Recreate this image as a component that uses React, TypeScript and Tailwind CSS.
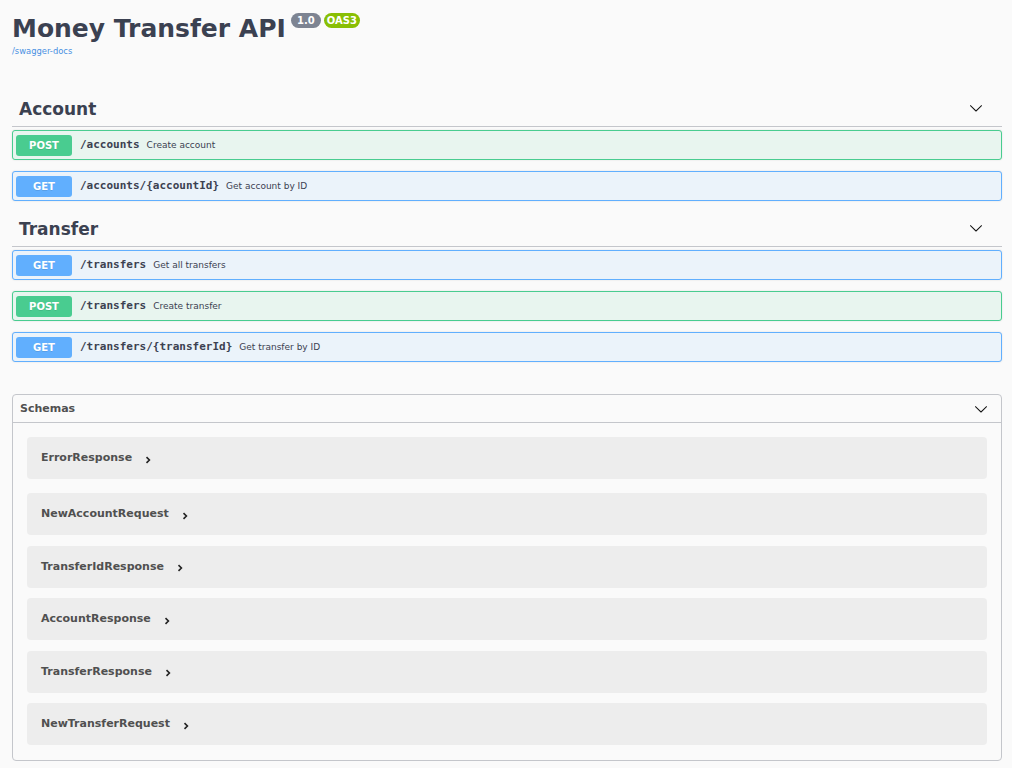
import React from "react";

type Op = { method: "GET" | "POST"; path: string; summary: string };

const tags: { name: string; ops: Op[] }[] = [
  {
    name: "Account",
    ops: [
      { method: "POST", path: "/accounts", summary: "Create account" },
      { method: "GET", path: "/accounts/{accountId}", summary: "Get account by ID" },
    ],
  },
  {
    name: "Transfer",
    ops: [
      { method: "GET", path: "/transfers", summary: "Get all transfers" },
      { method: "POST", path: "/transfers", summary: "Create transfer" },
      { method: "GET", path: "/transfers/{transferId}", summary: "Get transfer by ID" },
    ],
  },
];

const schemas = [
  "ErrorResponse",
  "NewAccountRequest",
  "TransferIdResponse",
  "AccountResponse",
  "TransferResponse",
  "NewTransferRequest",
];

function ChevronDown({ className = "" }: { className?: string }) {
  return (
    <svg viewBox="0 0 20 20" width="14" height="14" className={className}>
      <path
        fill="#111"
        d="M17.418 6.109c.272-.268.709-.268.979 0s.271.701 0 .969l-7.908 7.83c-.27.268-.707.268-.979 0l-7.908-7.83c-.27-.268-.27-.701 0-.969.271-.268.709-.268.979 0L10 13.25l7.418-7.141z"
      />
    </svg>
  );
}

function ChevronRight() {
  return (
    <svg viewBox="0 0 6 8" width="6" height="8">
      <path d="M1.5 1.2 L4.4 4 L1.5 6.8" fill="none" stroke="#222" strokeWidth="1.6" />
    </svg>
  );
}

function OpBlock({ op }: { op: Op }) {
  const post = op.method === "POST";
  return (
    <div
      className={`flex h-[30px] items-center rounded-[3px] border pl-[3px] shadow-[0_0_2px_rgba(0,0,0,0.12)] ${
        post ? "border-[#49cc90] bg-[#e8f5ef]" : "border-[#61affe] bg-[#ebf3fa]"
      }`}
    >
      <span
        className={`flex h-[21px] w-[56px] items-center justify-center rounded-[3px] text-[10px] font-bold text-white [text-shadow:0_1px_0_rgba(0,0,0,0.1)] ${
          post ? "bg-[#49cc90]" : "bg-[#61affe]"
        }`}
      >
        {op.method}
      </span>
      <span className="mt-[1px] ml-[8px] font-['DejaVu_Sans_Mono',monospace] text-[11px] font-bold text-[#3b4151]">
        {op.path}
      </span>
      <span className="mt-[1px] ml-[7px] text-[9px] text-[#3b4151]">{op.summary}</span>
    </div>
  );
}

export default function App() {
  return (
    <div className="min-h-screen bg-[#fafafa] pl-[12px] pr-[10px] font-['DejaVu_Sans',sans-serif] text-[#3b4151]">
      <div className="pt-[14px]">
        <div className="flex items-start">
          <h1 className="text-[25px] leading-[30px] font-bold text-[#3b4151]">Money Transfer API</h1>
          <span className="ml-[5px] -mt-[1px] h-[15px] w-[30px] rounded-full bg-[#7d8492] text-center text-[10px] leading-[15px] font-bold text-white">
            1.0
          </span>
          <span className="ml-[3px] -mt-[1px] h-[15px] w-[36px] rounded-full bg-[#89bf04] text-center text-[10px] leading-[15px] font-bold text-white">
            OAS3
          </span>
        </div>
        <div className="mt-[2px] h-[10px] text-[8.4px] leading-[10px] text-[#4990e2]">/swagger-docs</div>
      </div>

      <div className="mt-[34px]">
        {tags.map((t) => (
          <section key={t.name} className="pb-[9px]">
            <div className="flex h-[37px] items-center border-b border-[#c4c6cb] pl-[7px] pr-[19px]">
              <h3 className="mt-[2px] text-[17px] leading-[22px] font-bold">{t.name}</h3>
              <ChevronDown className="ml-auto" />
            </div>
            <div className="flex flex-col gap-[11px] pt-[3px]">
              {t.ops.map((op) => (
                <OpBlock key={op.method + op.path} op={op} />
              ))}
            </div>
          </section>
        ))}
      </div>

      <section className="mt-[23px] rounded-[4px] border border-[#c4c6cb]">
        <div className="flex h-[28px] items-center border-b border-[#c4c6cb] pl-[7px] pr-[13px]">
          <h4 className="mt-[1px] text-[11px] font-bold text-[#505050]">Schemas</h4>
          <ChevronDown className="ml-auto" />
        </div>
        <div className="flex flex-col gap-[10.5px] px-[14px] pt-[14px] pb-[15px]">
          {schemas.map((s, i) => (
            <div
              key={s}
              className={`flex h-[42px] items-center rounded-[4px] bg-[#ededed] pl-[14px] ${i === 1 ? "mt-[3.5px]" : ""}`}
            >
              <span className="mt-[1px] text-[11px] font-bold text-[#505050]">{s}</span>
              <span className="ml-[13px] mt-[3px] flex">
                <ChevronRight />
              </span>
            </div>
          ))}
        </div>
      </section>
    </div>
  );
}
